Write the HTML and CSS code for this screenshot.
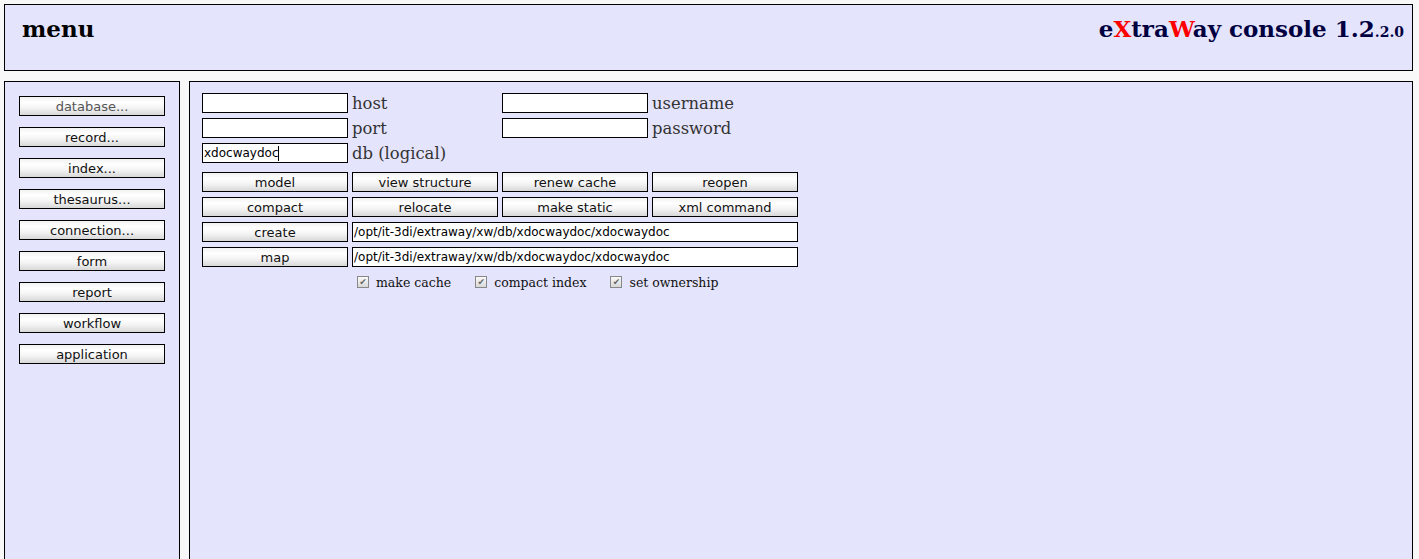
FILE: index.html
```html
<!DOCTYPE html>
<html>
<head>
<meta charset="utf-8">
<title>eXtraWay console</title>
<link rel="stylesheet" href="styles.css">
</head>
<body>
<div class="page">
  <header class="topbar">
    <h1 class="menu-title">menu</h1>
    <h1 class="brand">e<span class="red">X</span>tra<span class="red">W</span>ay console 1.2<span class="minor">.2.0</span></h1>
  </header>
  <div class="main">
    <nav class="side">
      <button class="btn side-btn dim">database...</button>
      <button class="btn side-btn">record...</button>
      <button class="btn side-btn">index...</button>
      <button class="btn side-btn">thesaurus...</button>
      <button class="btn side-btn">connection...</button>
      <button class="btn side-btn">form</button>
      <button class="btn side-btn">report</button>
      <button class="btn side-btn">workflow</button>
      <button class="btn side-btn">application</button>
    </nav>
    <section class="content">
      <div class="grid">
        <input class="field" type="text" value="">
        <span class="lbl">host</span>
        <input class="field" type="text" value="">
        <span class="lbl">username</span>

        <input class="field" type="text" value="">
        <span class="lbl">port</span>
        <input class="field" type="password" value="">
        <span class="lbl">password</span>

        <div class="field fake">xdocwaydoc<span class="caret"></span></div>
        <span class="lbl span3">db (logical)</span>
      </div>
      <div class="grid actions">
        <button class="btn">model</button>
        <button class="btn">view structure</button>
        <button class="btn">renew cache</button>
        <button class="btn">reopen</button>

        <button class="btn">compact</button>
        <button class="btn">relocate</button>
        <button class="btn">make static</button>
        <button class="btn">xml command</button>

        <button class="btn">create</button>
        <input class="field span3" type="text" value="/opt/it-3di/extraway/xw/db/xdocwaydoc/xdocwaydoc">

        <button class="btn">map</button>
        <input class="field span3" type="text" value="/opt/it-3di/extraway/xw/db/xdocwaydoc/xdocwaydoc">

        <div class="checks">
          <label class="chk"><span class="box">&#10004;</span>make cache</label>
          <label class="chk"><span class="box">&#10004;</span>compact index</label>
          <label class="chk"><span class="box">&#10004;</span>set ownership</label>
        </div>
      </div>
    </section>
  </div>
</div>
</body>
</html>
```

FILE: styles.css
```css
html, body {
  margin: 0;
  padding: 0;
  background: #f8f8f8;
  height: 100%;
  overflow: hidden;
}
.page {
  padding: 4px 6px 0 4px;
  display: flex;
  flex-direction: column;
  gap: 10px;
  height: 100%;
  box-sizing: border-box;
}
.topbar {
  flex: none;
  height: 65px;
  border: 1px solid #000;
  background: #e4e4fc;
  display: flex;
  justify-content: space-between;
  align-items: flex-start;
  padding: 0 8px 0 17px;
}
.menu-title, .brand {
  margin: 0;
  font-family: "DejaVu Serif", serif;
  font-weight: bold;
  font-size: 23px;
  line-height: 1;
  padding-top: 12px;
}
.menu-title { color: #000; }
.brand { color: #000040; }
.brand .red { color: #ff0000; }
.brand .minor { font-size: 14px; }
.main {
  flex: 1;
  display: flex;
  gap: 9px;
  margin-bottom: -20px;
}
.side {
  box-sizing: border-box;
  width: 176px;
  border: 1px solid #000;
  background: #e4e4fc;
  padding: 14px 0 0 14px;
  display: flex;
  flex-direction: column;
  gap: 11px;
}
.btn {
  box-sizing: border-box;
  width: 146px;
  height: 20px;
  margin: 0;
  padding: 1px 0 0;
  border: 1px solid #000;
  border-radius: 0;
  background: linear-gradient(#f2f2f2, #ffffff 30%, #f4f4f4 60%, #d8d8d8);
  font-family: "DejaVu Sans", sans-serif;
  font-size: 13px;
  color: #111;
  line-height: 17px;
}
.btn.dim { color: #555; }
.content {
  flex: 1;
  border: 1px solid #000;
  background: #e4e4fc;
  padding: 11px 0 0 12px;
}
.grid {
  display: grid;
  grid-template-columns: repeat(4, 146px);
  column-gap: 4px;
  row-gap: 5px;
  grid-auto-rows: 20px;
}
.actions { margin-top: 9px; }
.field {
  box-sizing: border-box;
  width: 100%;
  height: 20px;
  margin: 0;
  border: 1px solid #000;
  background: #fff;
  padding: 0 1px;
  font-family: "DejaVu Sans", sans-serif;
  font-size: 12px;
  color: #000;
  outline: none;
}
.fake {
  display: flex;
  align-items: center;
}
.caret {
  display: inline-block;
  width: 1px;
  height: 15px;
  background: #000;
}
.span3 { grid-column: span 3; }
.lbl {
  font-family: "DejaVu Serif", serif;
  font-size: 16.4px;
  color: #333;
  line-height: 20px;
  padding-top: 1px;
  white-space: nowrap;
}
.checks {
  grid-column: 2 / span 3;
  display: flex;
  align-items: center;
  padding-left: 5px;
  gap: 24px;
  font-family: "DejaVu Serif", serif;
  font-size: 12.5px;
  color: #111;
}
.chk {
  display: flex;
  align-items: center;
  gap: 7px;
}
.box {
  box-sizing: border-box;
  width: 12px;
  height: 12px;
  border: 1px solid #888;
  background: linear-gradient(#fafafa, #d8d8d8);
  font-size: 9px;
  line-height: 10px;
  text-align: center;
  color: #666;
  font-family: "DejaVu Sans", sans-serif;
}
```
